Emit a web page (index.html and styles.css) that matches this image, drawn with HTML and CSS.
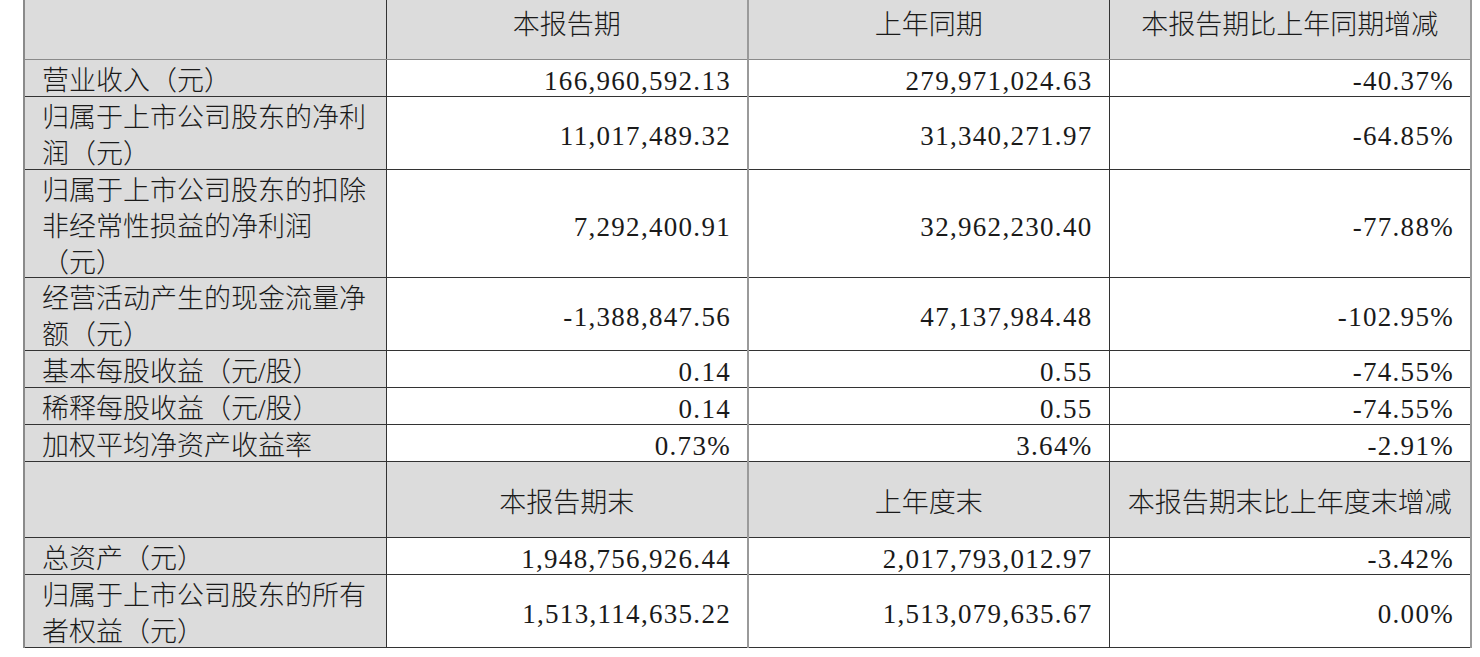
FILE: index.html
```html
<!DOCTYPE html>
<html lang="zh-CN">
<head>
<meta charset="utf-8">
<title>主要会计数据</title>
<link rel="stylesheet" href="styles.css">
</head>
<body>
<div class="page">
<table class="fin">
  <colgroup>
    <col class="c1"><col class="c2"><col class="c3"><col class="c4">
  </colgroup>
  <tbody>
    <tr class="head head-top">
      <td class="label"></td>
      <td class="hcell"><span class="t">本报告期</span></td>
      <td class="hcell mid"><span class="t">上年同期</span></td>
      <td class="hcell"><span class="t">本报告期比上年同期增减</span></td>
    </tr>
    <tr>
      <td class="label"><span class="t">营业收入（元）</span></td>
      <td class="num"><span class="t">166,960,592.13</span></td>
      <td class="num mid"><span class="t">279,971,024.63</span></td>
      <td class="num"><span class="t">-40.37%</span></td>
    </tr>
    <tr>
      <td class="label"><span class="t">归属于上市公司股东的净利润（元）</span></td>
      <td class="num"><span class="t">11,017,489.32</span></td>
      <td class="num mid"><span class="t">31,340,271.97</span></td>
      <td class="num"><span class="t">-64.85%</span></td>
    </tr>
    <tr class="soft">
      <td class="label"><span class="t">归属于上市公司股东的扣除非经常性损益的净利润（元）</span></td>
      <td class="num"><span class="t">7,292,400.91</span></td>
      <td class="num mid"><span class="t">32,962,230.40</span></td>
      <td class="num"><span class="t">-77.88%</span></td>
    </tr>
    <tr class="soft">
      <td class="label"><span class="t">经营活动产生的现金流量净额（元）</span></td>
      <td class="num"><span class="t">-1,388,847.56</span></td>
      <td class="num mid"><span class="t">47,137,984.48</span></td>
      <td class="num"><span class="t">-102.95%</span></td>
    </tr>
    <tr class="soft">
      <td class="label"><span class="t">基本每股收益（元/股）</span></td>
      <td class="num"><span class="t">0.14</span></td>
      <td class="num mid"><span class="t">0.55</span></td>
      <td class="num"><span class="t">-74.55%</span></td>
    </tr>
    <tr>
      <td class="label"><span class="t">稀释每股收益（元/股）</span></td>
      <td class="num"><span class="t">0.14</span></td>
      <td class="num mid"><span class="t">0.55</span></td>
      <td class="num"><span class="t">-74.55%</span></td>
    </tr>
    <tr>
      <td class="label"><span class="t">加权平均净资产收益率</span></td>
      <td class="num"><span class="t">0.73%</span></td>
      <td class="num mid"><span class="t">3.64%</span></td>
      <td class="num"><span class="t">-2.91%</span></td>
    </tr>
    <tr class="head">
      <td class="label"></td>
      <td class="hcell"><span class="t">本报告期末</span></td>
      <td class="hcell mid"><span class="t">上年度末</span></td>
      <td class="hcell"><span class="t">本报告期末比上年度末增减</span></td>
    </tr>
    <tr>
      <td class="label"><span class="t">总资产（元）</span></td>
      <td class="num"><span class="t">1,948,756,926.44</span></td>
      <td class="num mid"><span class="t">2,017,793,012.97</span></td>
      <td class="num"><span class="t">-3.42%</span></td>
    </tr>
    <tr>
      <td class="label"><span class="t">归属于上市公司股东的所有者权益（元）</span></td>
      <td class="num"><span class="t">1,513,114,635.22</span></td>
      <td class="num mid"><span class="t">1,513,079,635.67</span></td>
      <td class="num"><span class="t">0.00%</span></td>
    </tr>
  </tbody>
</table>
</div>
</body>
</html>
```

FILE: styles.css
```css
html, body {
  margin: 0;
  padding: 0;
  background: #ffffff;
}

.page {
  padding-left: 23px;
  margin-top: -16px;
}

.fin {
  border-collapse: collapse;
  table-layout: fixed;
  width: 1447px;
  font-family: "Liberation Serif", "Noto Sans CJK SC", serif;
  font-size: 27px;
  font-weight: 300;
  line-height: 35.9px;
  color: #1a1a1a;
}

.c1 { width: 362px; }
.c2 { width: 362px; }
.c3 { width: 361px; }
.c4 { width: 362px; }

.fin td {
  padding: 0;
  border: 1px solid #333333;
  vertical-align: middle;
  background: #ffffff;
}

.fin .t {
  display: block;
  margin-top: 4px;
  margin-bottom: -4px;
}

.fin td:first-child {
  border-left: 2px solid #8a8a8a;
}

.fin td:last-child {
  border-right: 2px solid #9a9a9a;
}

.fin td.mid {
  border-left: 2px solid #9a9a9a;
}

.fin .label {
  background: #dcdcdc;
  padding-left: 17px;
  padding-right: 10px;
  text-align: left;
}

.fin .num {
  text-align: right;
  padding-right: 16px;
  letter-spacing: 1.3px;
}

.fin .head td {
  background: #dcdcdc;
  height: 75px;
}

.fin .hcell {
  text-align: center;
}

.fin .head-top td {
  border-top: none;
  border-bottom: 1px solid #8a8a8a;
}

.fin .soft td {
  border-top-color: #8a8a8a;
}
```
